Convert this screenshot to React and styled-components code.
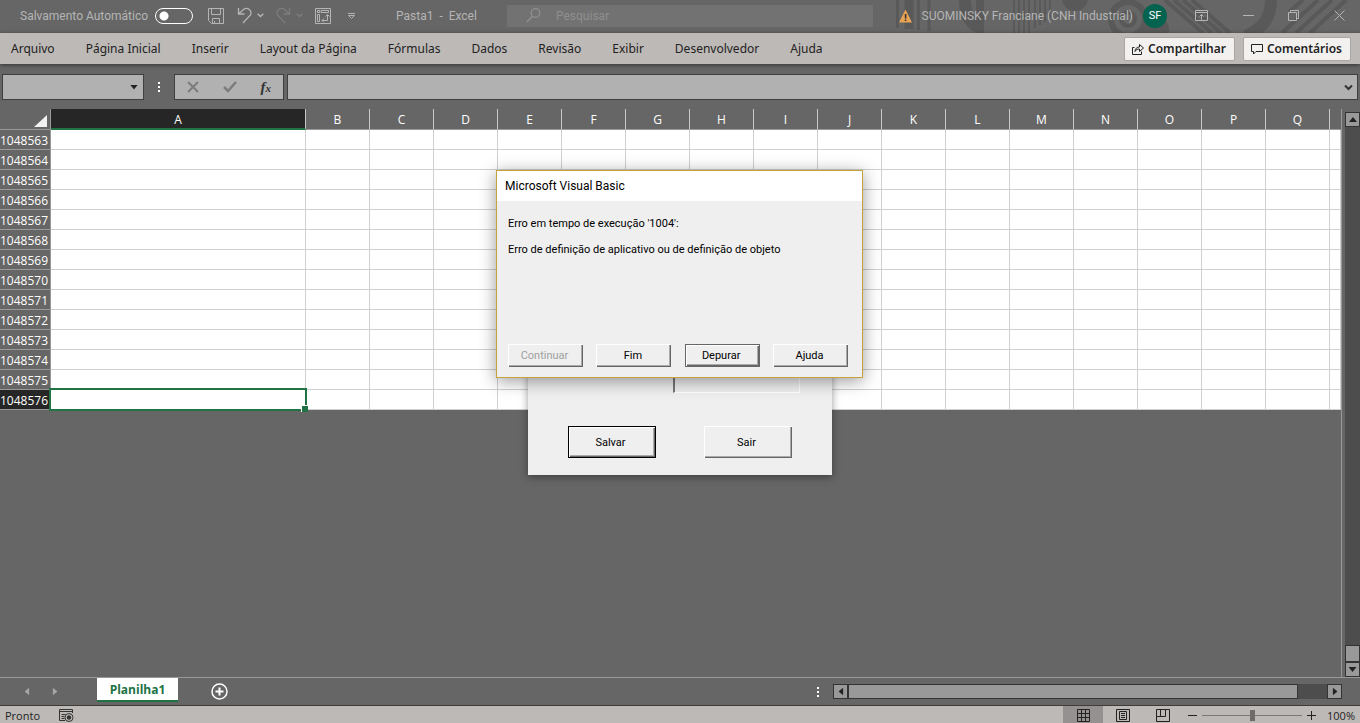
import React from "react";
import styled, { createGlobalStyle } from "styled-components";

const tabs = [
  "Arquivo",
  "Página Inicial",
  "Inserir",
  "Layout da Página",
  "Fórmulas",
  "Dados",
  "Revisão",
  "Exibir",
  "Desenvolvedor",
  "Ajuda",
];
const columns = "ABCDEFGHIJKLMNOPQ".split("");
const rows = Array.from({ length: 14 }, (_, i) => 1048563 + i);

function TitleArt() {
  return (
    <Art width="480" height="33" viewBox="880 0 480 33" aria-hidden="true">
      <g fill="none" stroke="#595959">
        <path d="M897.500 0v28M918.500 0v30M929 0v31" strokeWidth="3" />
        <path d="M909 0v29" strokeWidth="9" />
        <path d="M965 0c0 14 5 24 16 29" strokeWidth="12" />
        <path d="M980 0v33" strokeWidth="8" />
        <path d="M1014 0v33M1019 0v33M1024 0v33M1029 0v33" strokeWidth="2" />
        <path d="M1035 0v28M1040 0v25M1045 0v22M1050 0v18" strokeWidth="2" />
        <circle cx="1128" cy="19" r="17" strokeWidth="6" />
        <circle cx="1128" cy="19" r="7" strokeWidth="4" />
        <path
          d="M1165 0l38 33M1174 0l38 33M1183 0l38 33M1192 0l38 33"
          strokeWidth="4"
        />
        <path d="M1271 0c0 18-8 28-25 36" strokeWidth="12" />
        <path
          d="M1303 0l-14 12M1318 0l-36 33M1332 0l-36 33M1346 0l-36 33"
          strokeWidth="4"
        />
      </g>
      <circle cx="1075" cy="-2" r="13" fill="#595959" />
      <circle cx="1155" cy="30" r="14" fill="#595959" />
    </Art>
  );
}

function SaveIcon() {
  return (
    <Icon width="16" height="16" viewBox="0 0 16 16">
      <path d="M.5.5h15v15h-12l-3-3zM3.500.5v6h9v-6M4.500 15.500v-5h7v5M6.500 13v2.500" />
    </Icon>
  );
}

function UndoIcon() {
  return (
    <Icon width="15" height="17" viewBox="0 0 15 17">
      <path d="M1.500 1v6h6M1.500 7l5-4.500c4-3 9 1 7 5.500L6 16" strokeWidth="1.300" />
    </Icon>
  );
}

function RedoIcon() {
  return (
    <Icon width="15" height="17" viewBox="0 0 15 17" stroke="#7d7d7d">
      <path d="M13.500 1v6h-6M13.500 7l-5-4.500c-4-3-9 1-7 5.500L9 16" strokeWidth="1.300" />
    </Icon>
  );
}

function Chevron({ color = "#b5b5b5" }) {
  return (
    <Icon width="7" height="5" viewBox="0 0 7 5" stroke={color}>
      <path d="M.7.8l2.800 2.800L6.300.8" strokeWidth="1.400" />
    </Icon>
  );
}

function FormIcon() {
  return (
    <Icon width="16" height="16" viewBox="0 0 16 16">
      <path d="M.5.5h15v15H.5zM2.500 2.500h2v2h-2zM6 2.500h7.500v2H6zM2.500 6.500h2v7h-2zM7 12.500h5.500V7M10.500 8.500l2-2 2 2M9 10.500l-2 2 2 2" />
    </Icon>
  );
}

function App() {
  return (
    <Page>
      <GlobalStyle />
      <TitleBar>
        <TitleArt />
        <AutoSave>
          Salvamento Automático
          <Toggle type="checkbox" />
        </AutoSave>
        <QuickAccess>
          <BareButton aria-label="Salvar pasta">
            <SaveIcon />
          </BareButton>
          <SplitButton aria-label="Desfazer">
            <UndoIcon />
            <Chevron />
          </SplitButton>
          <SplitButton aria-label="Refazer">
            <RedoIcon />
            <Chevron color="#7d7d7d" />
          </SplitButton>
          <BareButton aria-label="Formulário">
            <FormIcon />
          </BareButton>
          <CustomizeButton aria-label="Personalizar">
            <Icon width="9" height="8" viewBox="0 0 9 8">
              <path d="M1 1.500h7M1.500 3.500h6L4.500 6.500z" />
            </Icon>
          </CustomizeButton>
        </QuickAccess>
        <FileName>Pasta1&nbsp; -&nbsp; Excel</FileName>
        <Search>
          <Icon width="15" height="15" viewBox="0 0 15 15" stroke="#8f8f8f">
            <circle cx="9.500" cy="5" r="4.300" strokeWidth="1.300" />
            <path d="M6.500 8.200L.7 14" strokeWidth="1.500" />
          </Icon>
          <SearchInput placeholder="Pesquisar" aria-label="Pesquisar" />
        </Search>
        <Account>
          <svg width="13" height="14" viewBox="0 0 13 14" aria-hidden="true">
            <path d="M6.500.5L13 13.500H0z" fill="#e8a455" />
            <path d="M5.800 5h1.600v4.500H5.800zM5.800 10.500h1.600V12H5.800z" fill="#333" />
          </svg>
          SUOMINSKY Franciane (CNH Industrial)
          <Avatar>SF</Avatar>
        </Account>
        <WindowButtons>
          <BareButton aria-label="Opções da faixa">
            <Icon width="13" height="11" viewBox="0 0 13 11">
              <path d="M.5.5h12v10H.5zM.5 2.500h12M6.500 9.500v-5M4.500 6.500l2-2 2 2" />
            </Icon>
          </BareButton>
          <BareButton aria-label="Minimizar">
            <Icon width="11" height="11" viewBox="0 0 11 11">
              <path d="M0 5.500h11" />
            </Icon>
          </BareButton>
          <BareButton aria-label="Restaurar">
            <Icon width="11" height="11" viewBox="0 0 11 11">
              <path d="M.5 2.500h8v8h-8zM2.500 2.500v-2h8v8h-2" />
            </Icon>
          </BareButton>
          <BareButton aria-label="Fechar">
            <Icon width="11" height="11" viewBox="0 0 11 11">
              <path d="M.5.5l10 10M10.500.5l-10 10" />
            </Icon>
          </BareButton>
        </WindowButtons>
      </TitleBar>

      <Ribbon>
        <Tabs>
          {tabs.map((tab) => (
            <Tab key={tab} href="#">
              {tab}
            </Tab>
          ))}
        </Tabs>
        <RibbonButton>
          <Icon width="12" height="12" viewBox="0 0 12 12" stroke="#222">
            <path d="M2.500 4.500h-2v7h9V8.500M3 8.500c0-3 2-4.500 4.500-4.500V1.500l4 3.500-4 3.500V6C5.500 6 4 6.500 3 8.500z" />
          </Icon>
          Compartilhar
        </RibbonButton>
        <RibbonButton>
          <Icon width="12" height="12" viewBox="0 0 12 12" stroke="#222">
            <path d="M.5 1.500h11v7H5l-2.500 2.500V8.500h-2z" />
          </Icon>
          Comentários
        </RibbonButton>
      </Ribbon>

      <FormulaBar>
        <NameBox>
          <BarInput aria-label="Caixa de nome" />
          <ArrowButton aria-label="Abrir nomes">
            <Triangle $dir="down" />
          </ArrowButton>
        </NameBox>
        <Dots />
        <FormulaTools>
          <BareButton aria-label="Cancelar">
            <Icon width="12" height="12" viewBox="0 0 12 12" stroke="#7c7c7c">
              <path d="M1 1l10 10M11 1L1 11" strokeWidth="2" />
            </Icon>
          </BareButton>
          <BareButton aria-label="Inserir valor">
            <Icon width="14" height="12" viewBox="0 0 14 12" stroke="#7c7c7c">
              <path d="M1 6l4 4 8-9" strokeWidth="2.500" />
            </Icon>
          </BareButton>
          <FxButton>
            f<sub>x</sub>
          </FxButton>
        </FormulaTools>
        <FormulaBox>
          <BarInput aria-label="Fórmula" />
          <ArrowButton aria-label="Expandir">
            <Icon width="9" height="7" viewBox="0 0 9 7" stroke="#333">
              <path d="M1 1.500L4.500 5 8 1.500" strokeWidth="2" />
            </Icon>
          </ArrowButton>
        </FormulaBox>
      </FormulaBar>

      <Workspace>
        <Sheet>
          <Grid>
            <colgroup>
              <Col $w={51} />
              {columns.map((name) => (
                <Col key={name} $w={name === "A" ? 255 : 64} />
              ))}
              <col />
            </colgroup>
            <thead>
              <tr>
                <Corner>
                  <svg width="13" height="12" viewBox="0 0 13 12">
                    <path d="M13 0v12H0z" fill="#f2f2f2" />
                  </svg>
                </Corner>
                {columns.map((name) => (
                  <ColHead key={name} $active={name === "A"}>
                    {name}
                  </ColHead>
                ))}
                <ColHead $last />
              </tr>
            </thead>
            <tbody>
              {rows.map((row) => (
                <tr key={row}>
                  <RowHead $active={row === 1048576}>{row}</RowHead>
                  {columns.map((name) => (
                    <Cell key={name}>
                      {row === 1048576 && name === "A" && <Selection />}
                    </Cell>
                  ))}
                  <Cell />
                </tr>
              ))}
            </tbody>
          </Grid>
        </Sheet>
        <VScroll>
          <ScrollButton aria-label="Para cima">
            <Triangle $dir="up" />
          </ScrollButton>
          <VTrack>
            <VThumb />
          </VTrack>
          <ScrollButton aria-label="Para baixo">
            <Triangle $dir="down" />
          </ScrollButton>
        </VScroll>
      </Workspace>

      <SheetBar>
        <SheetNav>
          <BareButton aria-label="Planilha anterior">
            <Triangle $dir="left" $color="#a6a6a6" />
          </BareButton>
          <BareButton aria-label="Próxima planilha">
            <Triangle $dir="right" $color="#a6a6a6" />
          </BareButton>
        </SheetNav>
        <SheetTab>Planilha1</SheetTab>
        <BareButton aria-label="Nova planilha">
          <Icon width="17" height="17" viewBox="0 0 17 17" stroke="#fff">
            <circle cx="8.500" cy="8.500" r="7.500" strokeWidth="1.500" />
            <path d="M8.500 4.500v8M4.500 8.500h8" strokeWidth="2" />
          </Icon>
        </BareButton>
        <Spacer />
        <Dots />
        <HScroll>
          <ScrollButton aria-label="Para esquerda">
            <Triangle $dir="left" />
          </ScrollButton>
          <HTrack>
            <HThumb />
          </HTrack>
          <ScrollButton aria-label="Para direita">
            <Triangle $dir="right" />
          </ScrollButton>
        </HScroll>
      </SheetBar>

      <StatusBar>
        Pronto
        <MacroButton aria-label="Gravar macro">
          <Icon width="15" height="13" viewBox="0 0 15 13" stroke="#333">
            <path d="M13.500 4V.5H.5v11H6M.5 2.500h13M2.500 5.500h4M2.500 7.500h3M2.500 9.500h3" />
            <circle cx="10" cy="8.500" r="4" />
            <circle cx="10" cy="8.500" r="1.800" fill="#333" />
          </Icon>
        </MacroButton>
        <Spacer />
        <ViewButton $active aria-label="Normal">
          <Icon width="13" height="13" viewBox="0 0 13 13" stroke="#222">
            <path d="M.5.5h12v12H.5zM4.500.5v12M8.500.5v12M.5 4.500h12M.5 8.500h12" />
          </Icon>
        </ViewButton>
        <ViewButton aria-label="Layout">
          <Icon width="14" height="13" viewBox="0 0 14 13" stroke="#222">
            <path d="M.5.5h13v12H.5zM3.500 2.500h7v8h-7zM5 4.500h4M5 6.500h4M5 8.500h4" />
          </Icon>
        </ViewButton>
        <ViewButton aria-label="Quebra de página">
          <Icon width="14" height="13" viewBox="0 0 14 13" stroke="#222">
            <path d="M.5.5h13v12H.5zM4.500.5v7M.5 7.500h9M9.500.5v7" />
          </Icon>
        </ViewButton>
        <ZoomOut aria-label="Reduzir">
          <Icon width="9" height="9" viewBox="0 0 9 9" stroke="#222">
            <path d="M0 4.500h9" />
          </Icon>
        </ZoomOut>
        <ZoomRange type="range" min="10" max="190" aria-label="Zoom" />
        <BareButton aria-label="Ampliar">
          <Icon width="9" height="9" viewBox="0 0 9 9" stroke="#222">
            <path d="M0 4.500h9M4.500 0v9" />
          </Icon>
        </BareButton>
        <ZoomValue>100%</ZoomValue>
      </StatusBar>

      <UserForm>
        <FormInput aria-label="Valor" />
        <FormActions>
          <FormButton $primary>Salvar</FormButton>
          <FormButton>Sair</FormButton>
        </FormActions>
      </UserForm>

      <ErrorDialog role="dialog" aria-labelledby="error-title">
        <DialogTitle id="error-title">Microsoft Visual Basic</DialogTitle>
        <DialogBody>
          <p>Erro em tempo de execução '1004':</p>
          <p>Erro de definição de aplicativo ou de definição de objeto</p>
        </DialogBody>
        <DialogActions>
          <DialogButton disabled>Continuar</DialogButton>
          <DialogButton>Fim</DialogButton>
          <DialogButton $primary>Depurar</DialogButton>
          <DialogButton>Ajuda</DialogButton>
        </DialogActions>
      </ErrorDialog>
    </Page>
  );
}

export default App;

const GlobalStyle = createGlobalStyle`
  * {
    box-sizing: border-box;
  }
  body {
    margin: 0;
  }
  button, input {
    font: inherit;
    color: inherit;
    margin: 0;
    padding: 0;
    border: 0;
    border-radius: 0;
    background: none;
    outline: none;
  }
  svg {
    display: block;
    flex: none;
  }
`;

const Page = styled.div`
  position: relative;
  display: flex;
  flex-direction: column;
  height: 100vh;
  overflow: hidden;
  background: #666;
  font-family: "Open Sans", "Noto Sans", sans-serif;
  font-size: 12px;
  color: #222;
`;
const Icon = styled.svg.attrs((p) => ({ stroke: p.stroke || "#b5b5b5" }))`
  fill: none;
`;
const BareButton = styled.button`
  display: flex;
  align-items: center;
  justify-content: center;
`;
const Spacer = styled.div`
  flex: 1;
`;

const TitleBar = styled.header`
  position: relative;
  display: flex;
  align-items: center;
  height: 33px;
  padding: 0 15px 2px 20px;
  color: #b5b5b5;
  font-family: Roboto, sans-serif;
`;
const Art = styled.svg`
  position: absolute;
  top: 0;
  right: 0;
`;
const AutoSave = styled.label`
  display: flex;
  align-items: center;
  justify-content: space-between;
  width: 173px;
  white-space: nowrap;
`;
const Toggle = styled.input`
  appearance: none;
  width: 38px;
  height: 16px;
  border: 1px solid #fff;
  border-radius: 8px;
  background: radial-gradient(circle at 8px 7px, #fff 4px, transparent 5px);
`;
const QuickAccess = styled.div`
  display: flex;
  align-items: center;
  gap: 13px;
  margin-left: 15px;
  width: 188px;
`;
const SplitButton = styled(BareButton)`
  gap: 5px;
  width: 26px;
`;
const CustomizeButton = styled(BareButton)`
  width: 14px;
`;
const FileName = styled.div`
  width: 111px;
  white-space: nowrap;
`;
const Search = styled.div`
  display: flex;
  align-items: center;
  gap: 15px;
  width: 366px;
  height: 22px;
  padding-left: 19px;
  background: #727272;
`;
const SearchInput = styled.input`
  flex: 1;
  &::placeholder {
    color: #8f8f8f;
  }
`;
const Account = styled.div`
  position: relative;
  display: flex;
  align-items: center;
  gap: 10px;
  margin-left: auto;
  white-space: nowrap;
`;
const Avatar = styled.div`
  width: 24px;
  height: 24px;
  border-radius: 50%;
  background: #04634f;
  color: #fff;
  font-size: 11px;
  line-height: 24px;
  text-align: center;
`;
const WindowButtons = styled.div`
  position: relative;
  display: flex;
  justify-content: space-between;
  width: 150px;
  margin-left: 28px;
`;

const Ribbon = styled.nav`
  position: relative;
  display: flex;
  align-items: center;
  gap: 8px;
  height: 31px;
  padding: 0 9px 0 11px;
  background: #bdb9b6;
  box-shadow: 0 1px 4px #333;
  font-family: "Noto Sans", sans-serif;
`;
const Tabs = styled.div`
  display: flex;
  flex: 1;
  gap: 31px;
  white-space: nowrap;
`;
const Tab = styled.a`
  color: #222;
  text-decoration: none;
`;
const RibbonButton = styled.button`
  display: flex;
  align-items: center;
  gap: 4px;
  height: 24px;
  padding: 0 8px 0 7px;
  border: 1px solid #aaa6a3;
  border-radius: 2px;
  background: #f3f1ef;
  font-weight: 600;
`;

const FormulaBar = styled.div`
  display: flex;
  height: 45px;
  padding: 10px 2px 9px;
`;
const Box = styled.div`
  display: flex;
  align-items: center;
  border: 1px solid #3f3f3f;
  background: #b1b1b1;
`;
const NameBox = styled(Box)`
  width: 142px;
`;
const FormulaTools = styled(Box)`
  justify-content: space-between;
  width: 110px;
  padding: 0 12px;
`;
const FormulaBox = styled(Box)`
  flex: 1;
  margin-left: 3px;
`;
const BarInput = styled.input`
  flex: 1;
  width: 10px;
  height: 22px;
`;
const ArrowButton = styled(BareButton)`
  width: 18px;
  height: 22px;
`;
const FxButton = styled.button`
  font: italic bold 15px "Liberation Serif", serif;
  color: #333;
  sub {
    font-size: 11px;
    vertical-align: 0;
  }
`;
const Dots = styled.div`
  align-self: center;
  width: 2px;
  height: 10px;
  margin: 0 14px;
  background: repeating-linear-gradient(#fff 0 2px, transparent 2px 4px);
`;
const turns = { down: 0, left: 90, up: 180, right: 270 };
const Triangle = styled.span`
  width: 8px;
  height: 5px;
  background: ${(p) => p.$color || "#222"};
  clip-path: polygon(0 0, 100% 0, 50% 100%);
  rotate: ${(p) => turns[p.$dir]}deg;
`;

const Workspace = styled.main`
  display: flex;
  flex: 1;
  min-height: 0;
  border-bottom: 1px solid #999;
`;
const Sheet = styled.div`
  flex: 1;
  border-right: 1px solid #999;
`;
const Grid = styled.table`
  width: 100%;
  table-layout: fixed;
  border-collapse: separate;
  border-spacing: 0;
  line-height: 17px;
`;
const Col = styled.col`
  width: ${(p) => p.$w}px;
`;
const Corner = styled.td`
  padding: 3px 4px 0 34px;
  border-right: 1px solid #999;
  border-bottom: 1px solid #999;
`;
const ColHead = styled.th`
  height: 21px;
  padding: ${(p) => (p.$active ? "2px 0 0" : "1px 0 0")};
  border-right: 1px solid ${(p) => (p.$last ? "transparent" : "#c8c8c8")};
  border-bottom: ${(p) => (p.$active ? "2px solid #217346" : "1px solid #999")};
  background: ${(p) => (p.$active ? "#262626" : "#666")};
  color: #fff;
  font-weight: 400;
`;
const RowHead = styled.th`
  height: 20px;
  padding: 1px 2px 0 0;
  border-right: 1px solid #999;
  border-bottom: 1px solid #999;
  background: ${(p) => (p.$active ? "#262626" : "#666")};
  color: #fff;
  font-weight: 400;
  text-align: right;
`;
const Cell = styled.td`
  position: relative;
  padding: 0;
  border-right: 1px solid #d0d0d0;
  border-bottom: 1px solid #d0d0d0;
  background: #fff;
`;
const Selection = styled.div`
  position: absolute;
  z-index: 1;
  inset: -2px;
  border: 2px solid #217346;
  &::after {
    content: "";
    position: absolute;
    right: -3px;
    bottom: -3px;
    width: 6px;
    height: 6px;
    border: solid #fff;
    border-width: 1px 0 0 1px;
    background: #217346;
  }
`;
const VScroll = styled.div`
  display: flex;
  flex-direction: column;
  width: 18px;
  padding: 3px 0 0 3px;
`;
const ScrollButton = styled(BareButton)`
  flex: none;
  width: 15px;
  height: 15px;
  border: 1px solid #333;
  background: #999;
`;
const VTrack = styled.div`
  display: flex;
  flex: 1;
  align-items: flex-end;
  background: #4d4d4d;
`;
const VThumb = styled.div`
  width: 15px;
  height: 17px;
  border: 1px solid #333;
  background: #999;
`;

const SheetBar = styled.div`
  display: flex;
  align-items: center;
  height: 27px;
  padding-right: 18px;
`;
const SheetNav = styled.div`
  display: flex;
  gap: 20px;
  width: 97px;
  padding-left: 23px;
`;
const SheetTab = styled.button`
  align-self: flex-start;
  width: 81px;
  height: 24px;
  margin-right: 33px;
  padding-top: 1px;
  border-bottom: 2px solid #217346;
  background: #fff;
  color: #217346;
  font-weight: 700;
`;
const HScroll = styled.div`
  display: flex;
  width: 509px;
`;
const HTrack = styled.div`
  flex: 1;
  background: #4d4d4d;
`;
const HThumb = styled.div`
  width: 94%;
  height: 15px;
  border: 1px solid #333;
  background: #999;
`;

const StatusBar = styled.footer`
  display: flex;
  align-items: center;
  height: 18px;
  padding: 2px 5px 0;
  border-top: 1px solid #403c3a;
  background: #bdb9b6;
  font-size: 11px;
`;
const MacroButton = styled(BareButton)`
  margin-left: 19px;
`;
const ViewButton = styled(BareButton)`
  align-self: stretch;
  width: 40px;
  margin-top: -2px;
  padding-top: 2px;
  background: ${(p) => (p.$active ? "#949190" : "none")};
`;
const ZoomOut = styled(BareButton)`
  margin-left: 5px;
`;
const ZoomRange = styled.input`
  appearance: none;
  width: 100px;
  height: 15px;
  margin: 0 5px;
  background: linear-gradient(#7a7775, #7a7775) center / 100% 1px no-repeat;
  &::-webkit-slider-thumb {
    appearance: none;
    width: 5px;
    height: 11px;
    background: #6e6b69;
  }
`;
const ZoomValue = styled.span`
  width: 39px;
  text-align: right;
`;

const UserForm = styled.form`
  position: absolute;
  top: 340px;
  left: calc(50% - 152px);
  width: 304px;
  height: 135px;
  padding: 32px 32px 0 40px;
  background: #efefef;
  box-shadow: 0 2px 8px rgba(0, 0, 0, 0.4);
  font: 11px Roboto, sans-serif;
  color: #000;
`;
const FormInput = styled.input`
  display: block;
  width: 127px;
  height: 21px;
  margin-left: auto;
  border: 1px solid #fff;
  border-left: 2px solid #777;
`;
const FormActions = styled.div`
  display: flex;
  gap: 48px;
  margin-top: 33px;
`;
const FormButton = styled.button.attrs({ type: "button" })`
  width: 88px;
  height: 32px;
  padding-right: 3px;
  border: ${(p) => (p.$primary ? "1px solid #000" : "0")};
  box-shadow: inset 1px 1px #fff, inset -1px -1px #666, inset -2px -2px #aaa;
`;
const ErrorDialog = styled.section`
  position: absolute;
  top: 170px;
  left: calc(50% - 184px);
  width: 367px;
  height: 208px;
  border: 1px solid #c4a23c;
  background: #efefef;
  box-shadow: 0 3px 16px rgba(0, 0, 0, 0.4);
  font: 11px Roboto, sans-serif;
  color: #000;
`;
const DialogTitle = styled.h1`
  margin: 0;
  padding-left: 8px;
  background: #fff;
  font: 12px/30px Roboto, sans-serif;
`;
const DialogBody = styled.div`
  height: 143px;
  padding: 16px 11px;
  p {
    margin: 0 0 12px;
    line-height: 14px;
    white-space: nowrap;
  }
`;
const DialogActions = styled.div`
  display: flex;
  justify-content: space-between;
  padding: 0 14px 0 11px;
`;
const DialogButton = styled.button`
  width: 75px;
  height: 23px;
  padding-right: 2px;
  border: ${(p) => (p.$primary ? "1px solid #666" : "0")};
  box-shadow: inset 1px 1px #fff, inset -1px -1px #666, inset -2px -2px #aaa;
  &:disabled {
    color: #a0a0a0;
  }
`;
